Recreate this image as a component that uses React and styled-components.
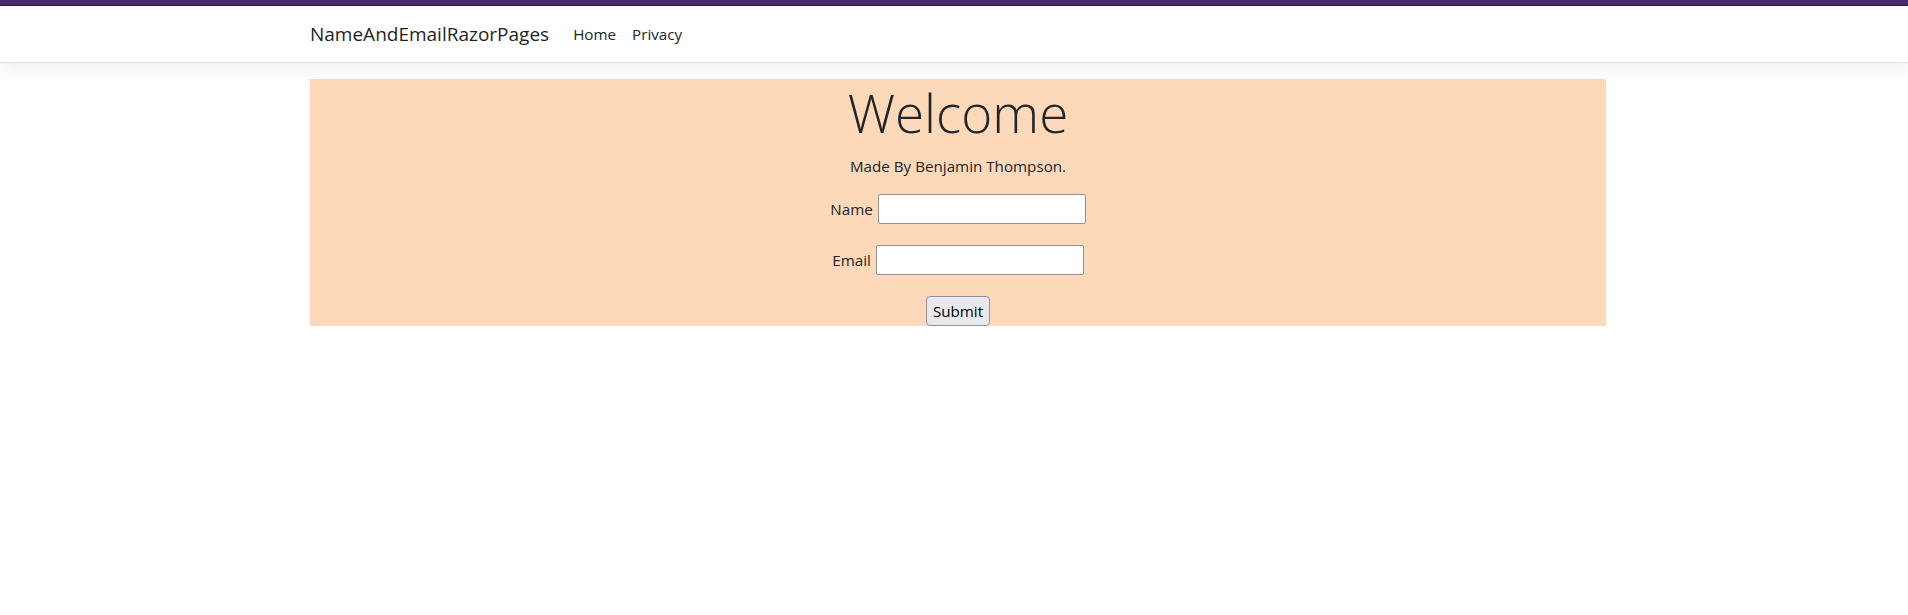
import React from 'react'
import styled, { createGlobalStyle } from 'styled-components'

const GlobalStyle = createGlobalStyle`
  html, body {
    margin: 0;
    padding: 0;
    background: #fff;
  }
  body {
    font-family: "Open Sans", "Noto Sans", sans-serif;
    font-size: 15.2px;
    line-height: 24px;
    color: #212529;
  }
  * {
    box-sizing: border-box;
  }
`

const TopStrip = styled.div`
  height: 6px;
  background: #472a6c;
  border-bottom: 1px solid #2b1948;
`

const NavBar = styled.nav`
  background: #fff;
  border-bottom: 1px solid #e0dfe6;
  box-shadow: 0 8px 16px rgba(0, 0, 0, 0.06);
  padding: 8px 0;
  margin-bottom: 16px;
`

const Container = styled.div`
  max-width: 1304px;
  margin: 0 auto;
  padding-left: 8px;
`

const NavInner = styled(Container)`
  display: flex;
  align-items: center;
  height: 40px;
`

const Brand = styled.a`
  font-size: 19px;
  line-height: 30px;
  padding: 5px 0;
  margin-right: 16px;
  color: rgba(0, 0, 0, 0.9);
  text-decoration: none;
  white-space: nowrap;
`

const NavList = styled.ul`
  display: flex;
  list-style: none;
  margin: 0;
  padding: 0;
`

const NavLink = styled.a`
  display: block;
  padding: 8px;
  font-size: 15.2px;
  line-height: 24px;
  color: #212529;
  text-decoration: none;
`

const WelcomeBox = styled.main`
  background: #fdd9b9;
  display: flex;
  flex-direction: column;
  align-items: center;
  text-align: center;
`

const Heading = styled.h1`
  font-size: 53px;
  font-weight: 300;
  line-height: 67px;
  margin: 0 0 8px;
`

const Byline = styled.p`
  margin: 0 0 16px;
  font-size: 15.2px;
  line-height: 24px;
`

const Form = styled.form`
  display: flex;
  flex-direction: column;
  align-items: center;
  gap: 21px;
`

const Row = styled.div`
  display: flex;
  align-items: center;
  gap: 5px;
`

const Label = styled.label`
  font-size: 15.2px;
  line-height: 24px;
`

const Input = styled.input`
  width: 208px;
  height: 30px;
  padding: 1px 2px;
  border: 1px solid #8f8f9d;
  border-radius: 2px;
  background: #fff;
  font: inherit;
`

const Button = styled.button`
  height: 30px;
  padding: 0 6px;
  border: 1px solid #8f8f9d;
  border-radius: 4px;
  background: #e9e9ed;
  color: #000;
  font-family: inherit;
  font-size: 15.2px;
  line-height: 24px;
`

export default function App() {
  return (
    <>
      <GlobalStyle />
      <TopStrip />
      <NavBar>
        <NavInner>
          <Brand href="#">NameAndEmailRazorPages</Brand>
          <NavList>
            <li><NavLink href="#">Home</NavLink></li>
            <li><NavLink href="#">Privacy</NavLink></li>
          </NavList>
        </NavInner>
      </NavBar>
      <Container>
        <WelcomeBox>
          <Heading>Welcome</Heading>
          <Byline>Made By Benjamin Thompson.</Byline>
          <Form onSubmit={e => e.preventDefault()}>
            <Row>
              <Label htmlFor="name">Name</Label>
              <Input id="name" type="text" />
            </Row>
            <Row>
              <Label htmlFor="email">Email</Label>
              <Input id="email" type="text" />
            </Row>
            <Button type="submit">Submit</Button>
          </Form>
        </WelcomeBox>
      </Container>
    </>
  )
}
